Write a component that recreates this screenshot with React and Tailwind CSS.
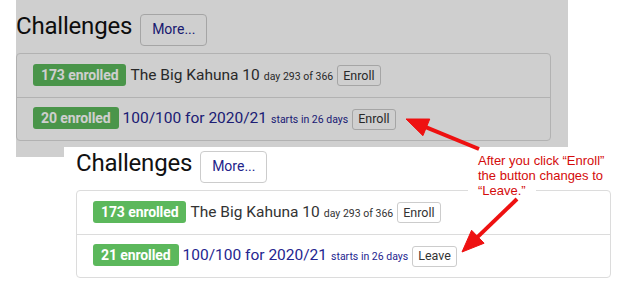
import React from "react";

const font = { fontFamily: "Roboto, 'Noto Sans', sans-serif" };

function Row({ count, title, note, action, link, first }) {
  return (
    <div
      className={
        "h-[43px] px-[16px] flex items-center " +
        (first ? "" : "border-t border-[#dcdcdc]")
      }
    >
      <div className="flex items-baseline">
        <span className="inline-flex h-[22px] items-center px-[8px] rounded-[3px] bg-[#5cb85c] text-white font-bold text-[14px] leading-none tracking-[-0.1px]">
          {count} enrolled
        </span>
        <span
          className={
            "ml-[4px] text-[15.5px] leading-[20px] " +
            (link ? "text-[#25258f]" : "text-[#333333]")
          }
        >
          {title}
        </span>
        <span
          className={
            "ml-[4px] text-[10.5px] " +
            (link ? "text-[#25258f]" : "text-[#333333]")
          }
        >
          {note}
        </span>
        <button className="ml-[4px] h-[21px] px-[5px] border border-[#cccccc] rounded-[3px] bg-white text-[12.5px] leading-none text-[#333333]">
          {action}
        </button>
      </div>
    </div>
  );
}

function Challenges({ second, action2 }) {
  return (
    <div className="w-[535px]" style={font}>
      <div className="flex items-baseline gap-[8px]">
        <h2 className="text-[24px] leading-[28px] text-[#111111] tracking-[-0.2px]">Challenges</h2>
        <button className="h-[32px] px-[11px] border border-[#cccccc] rounded-[4px] bg-white text-[14px] text-[#22228a]">
          More...
        </button>
      </div>
      <div className="mt-[7px] border border-[#dcdcdc] rounded-[4px] bg-white">
        <Row
          first
          count={173}
          title="The Big Kahuna 10"
          note="day 293 of 366"
          action="Enroll"
        />
        <Row
          link
          count={second}
          title="100/100 for 2020/21"
          note="starts in 26 days"
          action={action2}
        />
      </div>
    </div>
  );
}

function arrow(x1, y1, x2, y2, L = 22, w = 9) {
  const dx = x2 - x1;
  const dy = y2 - y1;
  const len = Math.hypot(dx, dy);
  const ux = dx / len;
  const uy = dy / len;
  const bx = x2 - ux * L;
  const by = y2 - uy * L;
  const nx = -uy;
  const ny = ux;
  return {
    line: [x1, y1, bx + ux * 2, by + uy * 2],
    pts: `${x2},${y2} ${bx + nx * w},${by + ny * w} ${bx - nx * w},${by - ny * w}`,
  };
}

export default function App() {
  const a1 = arrow(479, 149, 406, 119);
  const a2 = arrow(517, 199, 462, 252);
  return (
    <div className="relative w-[620px] h-[300px] bg-white overflow-hidden">
      {/* dimmed screenshot (before) */}
      <div className="absolute left-[16px] top-0 w-[552px] h-[157px] bg-white pt-[12px] overflow-hidden">
        <Challenges second={20} action2="Enroll" />
        <div className="absolute inset-0 bg-black/[0.19]" />
      </div>

      {/* after screenshot */}
      <div className="absolute left-[64px] top-[147px] right-0 bottom-0 bg-white pl-[12px] pt-[2px]">
        <Challenges second={21} action2="Leave" />
      </div>

      {/* annotation */}
      <div
        className="absolute left-[468px] top-[153px] text-[13px] leading-[15px] text-[#d40b0b]"
        style={{ fontFamily: "'Liberation Sans', Arial, sans-serif" }}
      >
        <div className="w-fit bg-white px-[10px]">After you click “Enroll”</div>
        <div className="w-fit bg-white px-[10px]">the button changes to</div>
        <div className="w-fit bg-white px-[10px]">“Leave.”</div>
      </div>

      <svg className="absolute inset-0 pointer-events-none" width="620" height="300">
        {[a1, a2].map((a, i) => (
          <g key={i} fill="#ee1111" stroke="#ee1111">
            <line
              x1={a.line[0]}
              y1={a.line[1]}
              x2={a.line[2]}
              y2={a.line[3]}
              strokeWidth="4"
            />
            <polygon points={a.pts} strokeWidth="1" strokeLinejoin="round" />
          </g>
        ))}
      </svg>
    </div>
  );
}
